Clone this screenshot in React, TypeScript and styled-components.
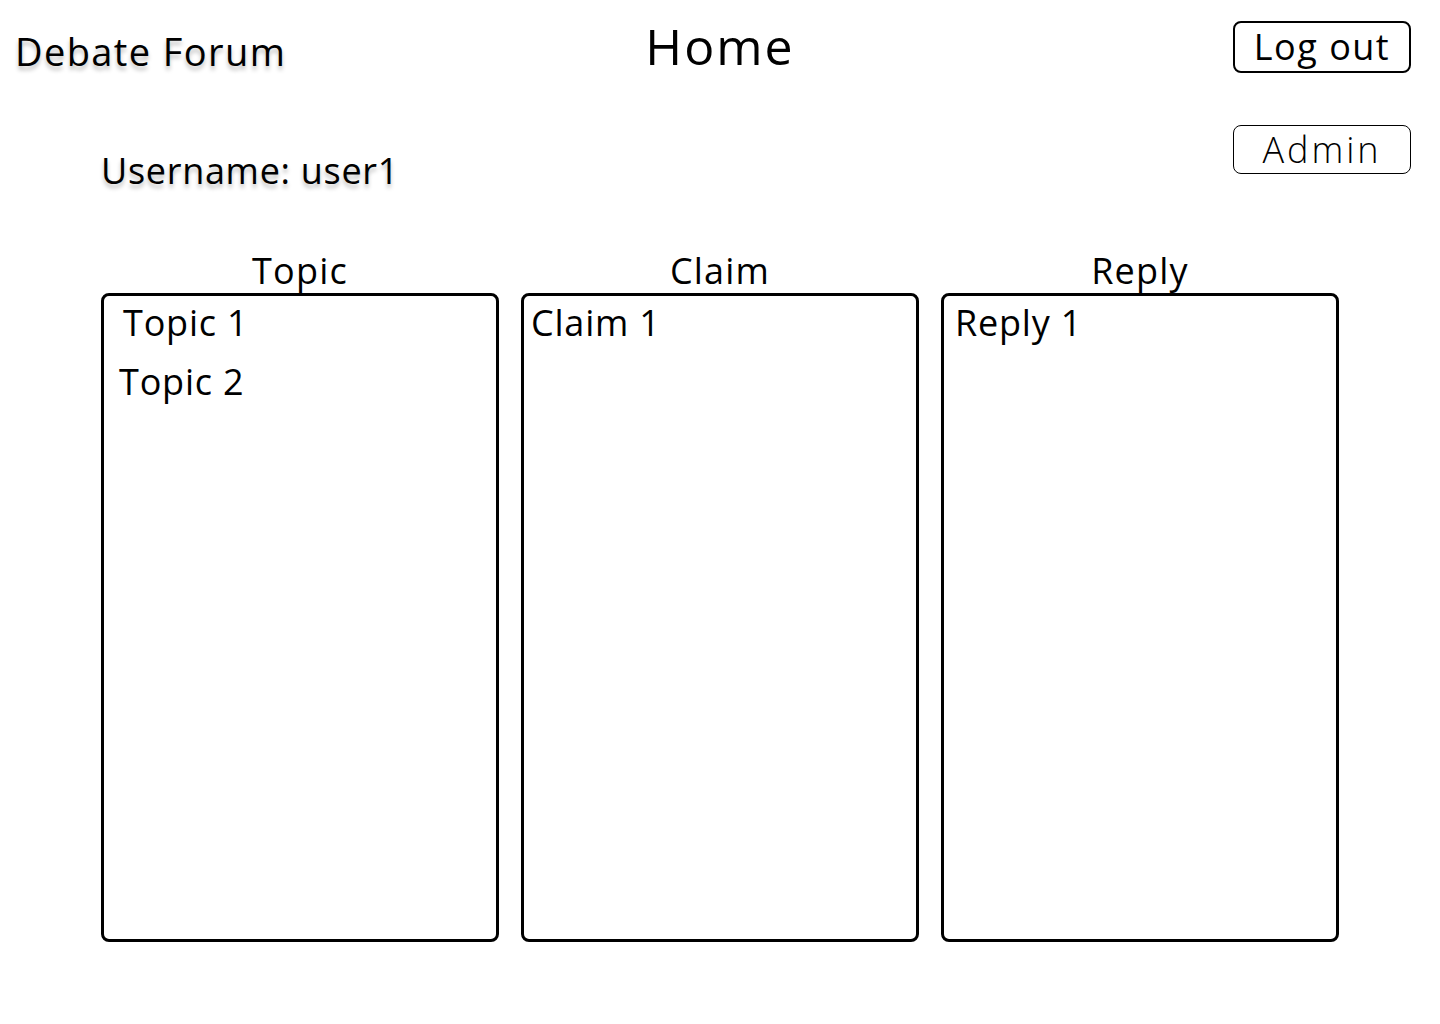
import styled, { createGlobalStyle } from 'styled-components';

const GlobalStyle = createGlobalStyle`
  body {
    margin: 0;
    background: rgb(255, 255, 255);
    color: rgb(0, 0, 0);
    font-family: "Open Sans", "Liberation Sans", sans-serif;
  }
`;

const Page = styled.div`
  width: 1440px;
  min-height: 1024px;
  box-sizing: border-box;
  padding: 21px 29px 0;
`;

const Header = styled.header`
  display: grid;
  grid-template-columns: 1fr auto 1fr;
  align-items: start;
`;

const Brand = styled.div`
  margin-left: -14px;
  font-size: 38px;
  line-height: 1;
  padding-top: 11px;
  letter-spacing: 1.4px;
  text-shadow: 0 4px 4px rgba(0, 0, 0, 0.25);
`;

const Title = styled.h1`
  margin: 0;
  font-size: 50px;
  font-weight: 400;
  line-height: 1;
  letter-spacing: 2px;
`;

const Actions = styled.div`
  display: flex;
  justify-content: flex-end;
`;

const Button = styled.button<{ $light?: boolean }>`
  width: 178px;
  height: ${(p) => (p.$light ? '49px' : '52px')};
  box-sizing: border-box;
  padding: 0;
  background: rgb(255, 255, 255);
  border: ${(p) => (p.$light ? '1px solid rgb(0, 0, 0)' : '2px solid rgb(0, 0, 0)')};
  border-radius: 8px;
  font-family: inherit;
  font-size: 36px;
  font-weight: ${(p) => (p.$light ? 300 : 400)};
  line-height: 1;
  letter-spacing: ${(p) => (p.$light ? '3px' : '1.5px')};
  color: rgb(0, 0, 0);
  cursor: pointer;
`;

const UserRow = styled.div`
  display: flex;
  justify-content: space-between;
  align-items: flex-start;
  margin-top: 52px;
  padding-left: 72px;
`;

const Username = styled.div`
  font-size: 36px;
  line-height: 1;
  padding-top: 28px;
  letter-spacing: 0.7px;
  text-shadow: 0 4px 4px rgba(0, 0, 0, 0.25);
`;

const Board = styled.div`
  display: grid;
  grid-template-columns: repeat(3, 398px);
  gap: 22px;
  margin-top: 62px;
  padding-left: 72px;
`;

const Column = styled.section`
  display: flex;
  flex-direction: column;
`;

const ColumnTitle = styled.h2`
  margin: 0 0 2px;
  font-size: 36px;
  font-weight: 400;
  line-height: 40px;
  letter-spacing: 1.2px;
  text-align: center;
`;

const ListBox = styled.div`
  height: 649px;
  box-sizing: border-box;
  border: 3px solid rgb(0, 0, 0);
  border-radius: 8px;
  padding-top: 5px;
  display: flex;
  flex-direction: column;
  gap: 15px;
`;

const Item = styled.div<{ $indent: number }>`
  padding-left: ${(p) => p.$indent}px;
  font-size: 36px;
  line-height: 44px;
  letter-spacing: 0.8px;
`;

const columns = [
  { title: 'Topic', items: [{ label: 'Topic 1', indent: 19 }, { label: 'Topic 2', indent: 15 }] },
  { title: 'Claim', items: [{ label: 'Claim 1', indent: 7 }] },
  { title: 'Reply', items: [{ label: 'Reply 1', indent: 11 }] },
];

const App = () => {
  return (
    <Page>
      <GlobalStyle />
      <Header>
        <Brand>Debate Forum</Brand>
        <Title>Home</Title>
        <Actions>
          <Button>Log out</Button>
        </Actions>
      </Header>
      <UserRow>
        <Username>Username: user1</Username>
        <Button $light>Admin</Button>
      </UserRow>
      <Board>
        {columns.map((col) => (
          <Column key={col.title}>
            <ColumnTitle>{col.title}</ColumnTitle>
            <ListBox>
              {col.items.map((item) => (
                <Item key={item.label} $indent={item.indent}>
                  {item.label}
                </Item>
              ))}
            </ListBox>
          </Column>
        ))}
      </Board>
    </Page>
  );
};

export default App;
